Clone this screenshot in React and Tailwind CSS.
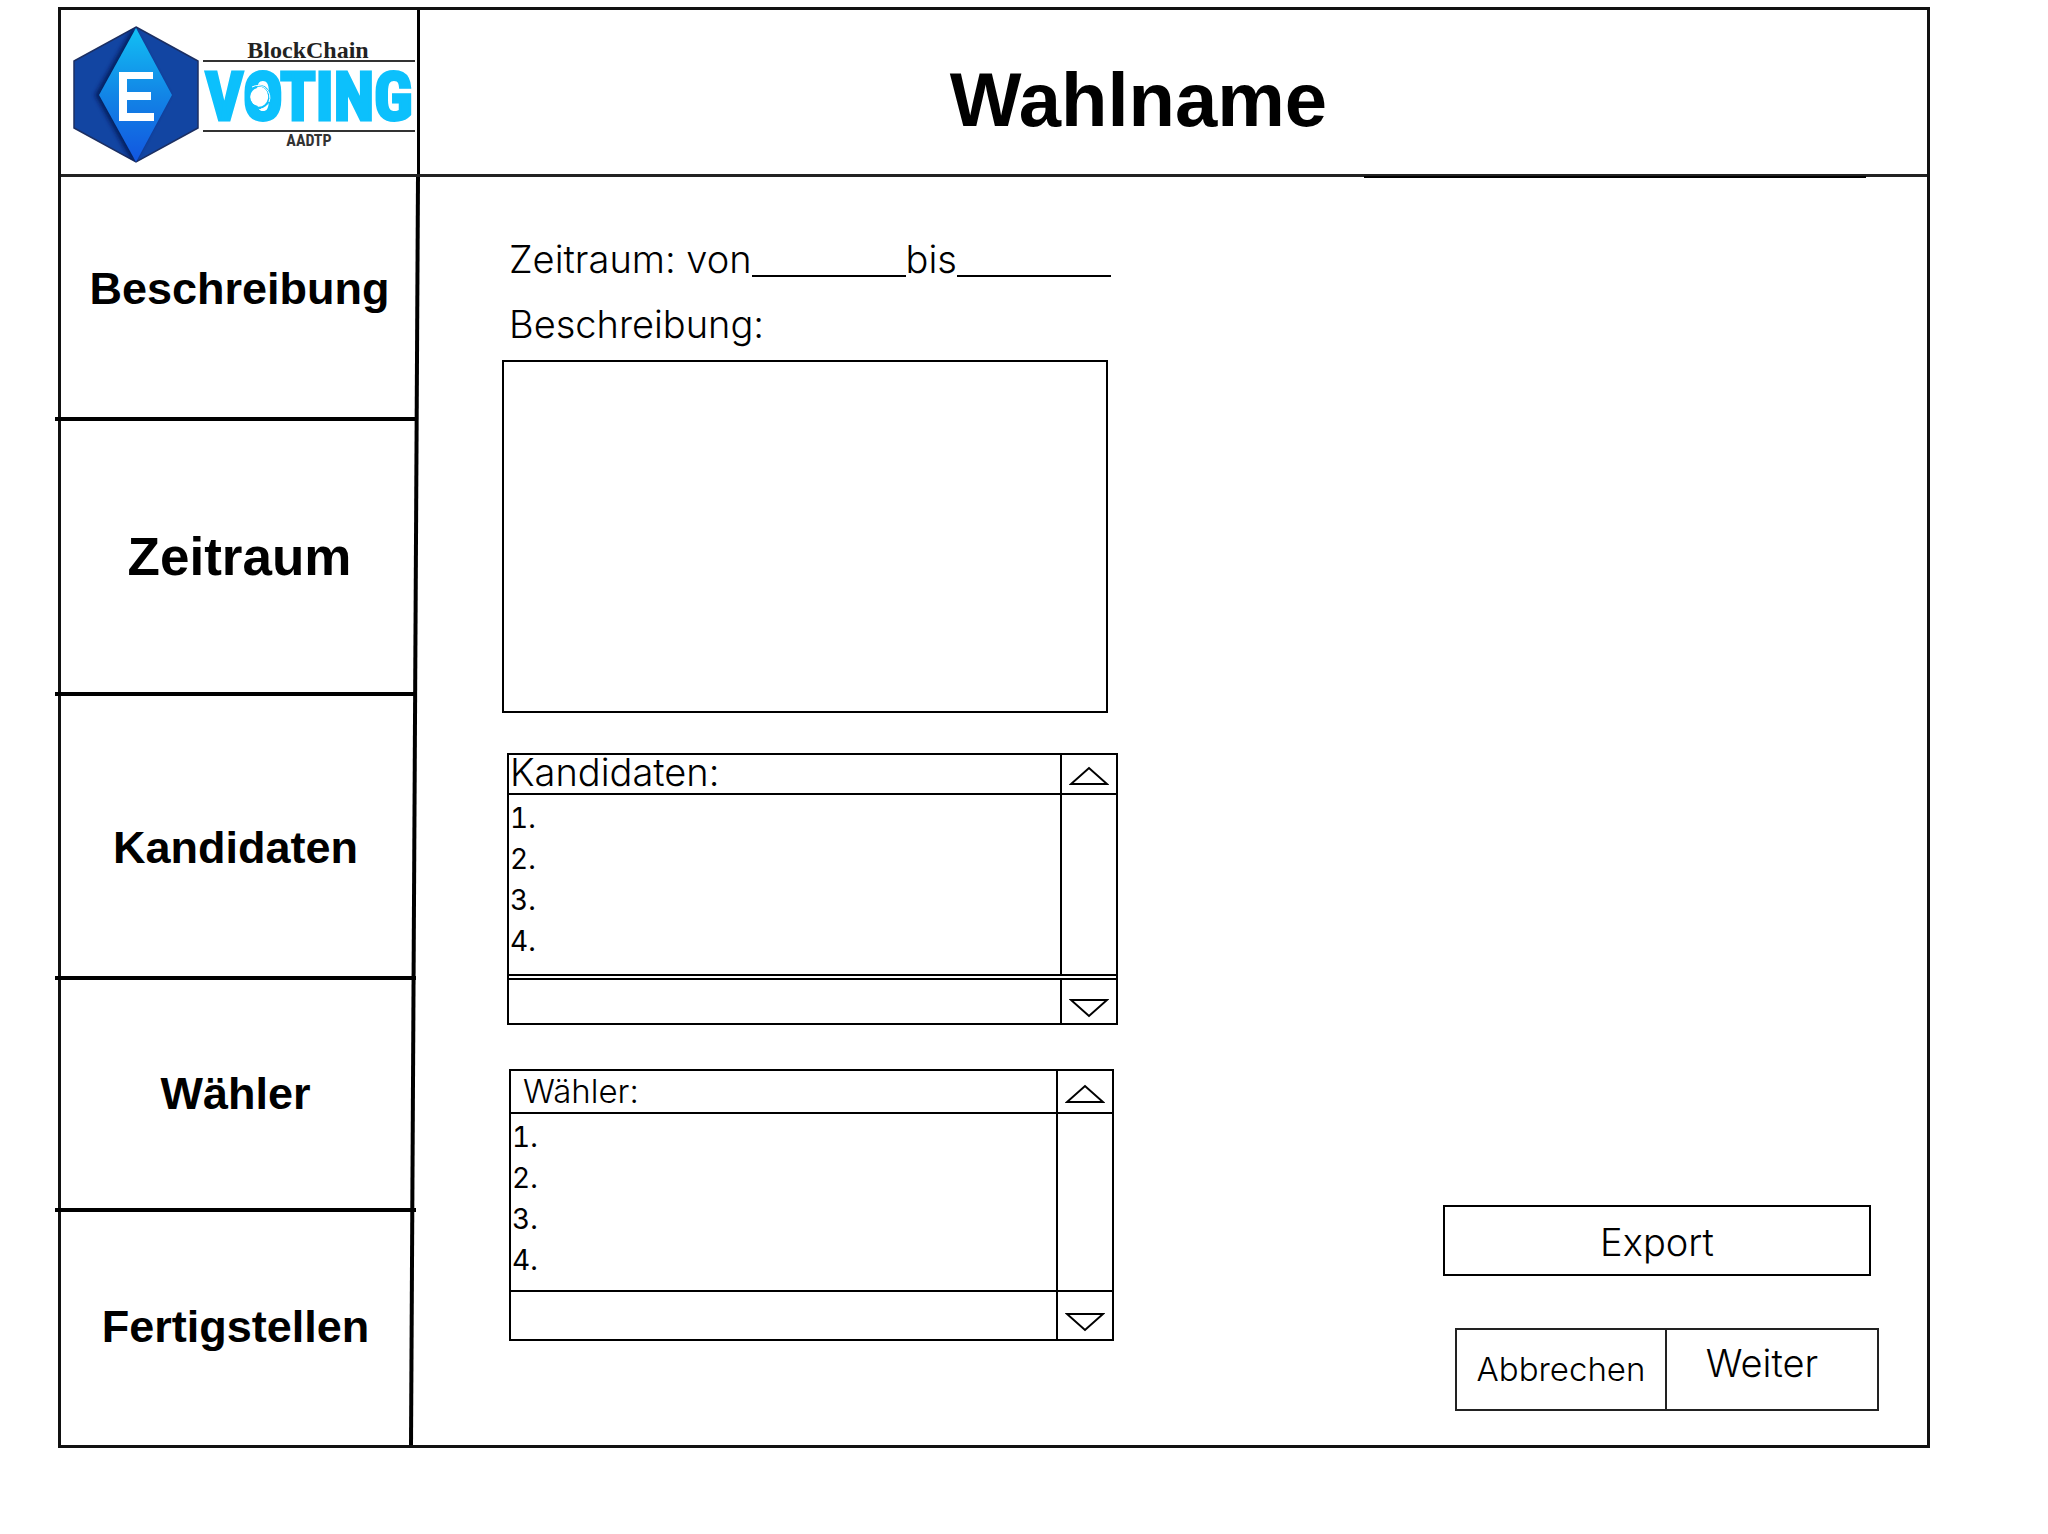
const NAV = [
  { label: "Beschreibung", cell: "h-[244px] pb-4 pl-2 text-[45px] border-b-4" },
  { label: "Zeitraum", cell: "h-[275px] pl-2 text-[53px] border-b-4" },
  { label: "Kandidaten", cell: "h-[284px] pt-6 text-[45px] border-b-4" },
  { label: "Wähler", cell: "h-[232px] text-[45px] border-b-4" },
  { label: "Fertigstellen", cell: "h-[233px] pb-1 text-[45px]" },
];

function Logo() {
  return (
    <svg viewBox="0 0 356 164" className="block h-[164px] w-[356px]" role="img" aria-label="BlockChain E-Voting AADTP">
      <defs>
        <linearGradient id="diamond" x1="0" y1="0" x2="0" y2="1">
          <stop offset="0" stopColor="#12c0f4" />
          <stop offset="0.5" stopColor="#1285e6" />
          <stop offset="1" stopColor="#1256e0" />
        </linearGradient>
        <filter id="shade" x="-30%" y="-10%" width="160%" height="120%">
          <feGaussianBlur stdDeviation="2" />
        </filter>
        <clipPath id="hexagon">
          <path d="M75 17 137 51V118L75 152 13 118V51Z" />
        </clipPath>
      </defs>
      <path d="M75 17 137 51V118L75 152 13 118V51Z" fill="#1245a2" stroke="#1c2f62" strokeWidth="1.5" />
      <g clipPath="url(#hexagon)">
        <path d="M72 17 108 85 72 154 34 85Z" fill="#04184f" filter="url(#shade)" opacity="0.8" />
      </g>
      <path d="M75 18 111 85 75 152 38 85Z" fill="url(#diamond)" />
      <path d="M58 62H92V69H66V82H90V90H66V103H93V111H58Z" fill="#fff" />
      <text x="247" y="48" textAnchor="middle" fontFamily="'Liberation Serif', serif" fontWeight="700" fontSize="24" fill="#222">BlockChain</text>
      <path d="M142 51H354M142 121H354" stroke="#333" strokeWidth="2" />
      <text x="248" y="110" textAnchor="middle" fontFamily="'Roboto Condensed', 'Liberation Sans Narrow', 'Liberation Sans', sans-serif" fontWeight="700" fontSize="66" fill="#0cc0fc" stroke="#0cc0fc" strokeWidth="3">VOTING</text>
      <circle cx="198" cy="87" r="9" fill="#fff" />
      <path d="M196 76A11 11 0 0 1 206 94M200 98A11 11 0 0 1 189 83M207 82A11 11 0 0 1 191 96" fill="none" stroke="#0cc0fc" strokeWidth="2" />
      <path d="M191 77A12 12 0 0 1 208 92" fill="none" stroke="#fff" strokeWidth="1" />
      <text x="248" y="136" textAnchor="middle" fontFamily="'Roboto Condensed', 'Liberation Sans', sans-serif" fontWeight="700" fontSize="16" fill="#333">AADTP</text>
    </svg>
  );
}

function Arrow({ down, label }) {
  return (
    <button type="button" aria-label={label} className="flex w-full justify-center">
      <svg viewBox="0 0 40 20" className="block h-5 w-10" fill="none" stroke="#000" strokeWidth="2">
        {down ? <path d="M2 2H38L20 18Z" /> : <path d="M2 18H38L20 2Z" />}
      </svg>
    </button>
  );
}

function ListBox({ title, box, header, heading, body, footer }) {
  return (
    <section className={`border-2 border-black ${box}`}>
      <div className={`flex border-b-2 border-black ${header}`}>
        <h2 className={`flex-1 font-light ${heading}`}>{title}</h2>
        <div className="flex w-[56px] items-center border-l-2 border-black pt-1">
          <Arrow label={`${title} nach oben`} />
        </div>
      </div>
      <div className={`flex ${body}`}>
        <ol className="flex-1 pt-[3px] pl-px text-[28px] leading-[41px] tabular-nums">
          {[1, 2, 3, 4].map((n) => (
            <li key={n}>{n}.</li>
          ))}
        </ol>
        <div className="w-[56px] border-l-2 border-black" />
      </div>
      <div className={`flex border-black ${footer}`}>
        <div className="flex-1" />
        <div className="flex w-[56px] items-center border-l-2 border-black pt-3">
          <Arrow down label={`${title} nach unten`} />
        </div>
      </div>
    </section>
  );
}

export default function App() {
  return (
    <div className="bg-white pt-[7px] pr-[118px] pb-20 pl-[58px] font-[Inter,'Liberation_Sans',sans-serif] text-black">
      <div className="border-[3px] border-[#111]">
        <header className="relative flex h-[167px] border-b-[3px] border-[#222]">
          <div className="w-[359px] border-r-[3px] border-black">
            <Logo />
          </div>
          <h1 className="flex flex-1 items-center justify-center pt-4 pr-[70px] font-['Liberation_Sans',sans-serif] text-[76px] font-bold">
            Wahlname
          </h1>
          <span className="absolute right-[61px] -bottom-1 h-0.5 w-[502px] bg-black" />
        </header>
        <div className="flex">
          <nav className="flex w-[348px] flex-col font-['Liberation_Sans',sans-serif] font-bold">
            {NAV.map(({ label, cell }) => (
              <button key={label} type="button" className={`-mr-[7px] -ml-[6px] flex items-center justify-center border-black ${cell}`}>
                {label}
              </button>
            ))}
          </nav>
          <svg viewBox="0 0 12 1268" preserveAspectRatio="none" className="h-[1268px] w-3" aria-hidden="true">
            <path d="M9 0 2 1268" stroke="#000" strokeWidth="4" />
          </svg>
          <main className="flex flex-1 justify-between pr-12 pl-[81px]">
            <form className="w-[620px] pt-[58px]">
              <div className="flex pl-[7px] text-[38px] leading-[48px] font-light whitespace-nowrap">
                <label htmlFor="von">Zeitraum: von</label>
                <input id="von" className="h-[42px] w-[154px] border-b-2 border-black outline-none" />
                <label htmlFor="bis">bis</label>
                <input id="bis" className="h-[42px] w-[154px] border-b-2 border-black outline-none" />
              </div>
              <label htmlFor="text" className="mt-[17px] block pl-[7px] text-[38px] leading-[48px] font-light">
                Beschreibung:
              </label>
              <textarea id="text" className="mt-3 block h-[353px] w-[606px] resize-none border-2 border-black outline-none" />
              <ListBox
                title="Kandidaten:"
                box="mt-10 ml-[5px] w-[611px]"
                header="h-[40px]"
                heading="pl-px text-[38px] leading-[35px]"
                body="h-[179px]"
                footer="h-[49px] border-t-[6px] border-double"
              />
              <ListBox
                title="Wähler:"
                box="mt-11 ml-[7px] w-[605px]"
                header="h-[43px]"
                heading="pl-3 text-[33px] leading-[40px]"
                body="h-[176px]"
                footer="h-[49px] border-t-2"
              />
            </form>
            <div className="flex w-[436px] flex-col self-end pb-[34px] font-light">
              <button type="button" className="mr-2 h-[71px] border-2 border-black pt-1 text-[38px]">
                Export
              </button>
              <div className="mt-[52px] ml-3 flex h-[83px] border-2 border-[#222]">
                <button type="button" className="w-1/2 border-r-2 border-[#222] text-[33px]">
                  Abbrechen
                </button>
                <button type="button" className="w-1/2 pr-5 pb-3 text-[38px]">
                  Weiter
                </button>
              </div>
            </div>
          </main>
        </div>
      </div>
    </div>
  );
}
